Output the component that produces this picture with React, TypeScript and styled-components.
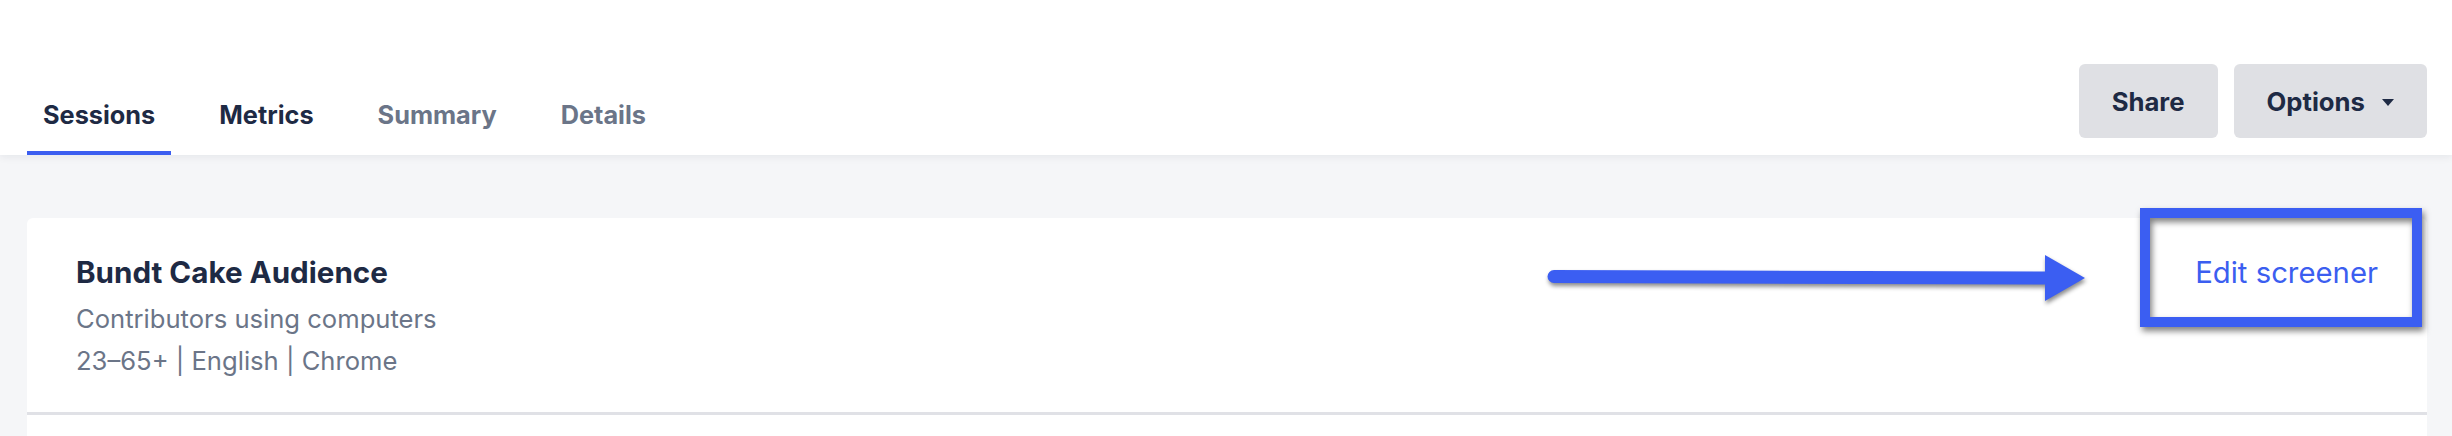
import React from "react";
import styled, { createGlobalStyle } from "styled-components";

const FONT = `"Inter", "Noto Sans", sans-serif`;

const GlobalStyle = createGlobalStyle`
  html, body { margin: 0; padding: 0; background: #f5f6f8; overflow: hidden; }
  body { font-family: ${FONT}; -webkit-font-smoothing: antialiased; }
  * { box-sizing: border-box; }
`;

const Page = styled.div`
  width: 2452px;
  min-height: 436px;
  background: #f5f6f8;
`;

const Header = styled.header`
  position: relative;
  z-index: 1;
  height: 155px;
  background: #fff;
  box-shadow: 0 2px 8px rgba(20, 30, 50, 0.07);
  display: flex;
  justify-content: space-between;
  padding: 0 25px 0 27px;
`;

const Tabs = styled.nav`
  display: flex;
  align-self: flex-end;
  gap: 32px;
`;

const Tab = styled.a<{ $active?: boolean; $dim?: boolean }>`
  font-size: 25.3px;
  font-weight: 700;
  line-height: 30px;
  padding: 0 16px 21px;
  color: ${(p) => (p.$dim ? "#6b7588" : "#1e2a44")};
  border-bottom: 4px solid ${(p) => (p.$active ? "#3b5ef0" : "transparent")};
  cursor: pointer;
`;

const Actions = styled.div`
  display: flex;
  gap: 16px;
  padding-top: 64px;
  align-self: flex-start;
`;

const Button = styled.button`
  height: 74px;
  padding: 0 33px;
  border: none;
  border-radius: 6px;
  background: #dfe0e4;
  color: #1e2a44;
  font: 700 25.7px ${FONT};
  display: flex;
  align-items: center;
  gap: 17px;
`;

const Caret = styled.span`
  width: 0;
  height: 0;
  border-left: 6.5px solid transparent;
  border-right: 6.5px solid transparent;
  border-top: 7px solid #1e2a44;
  margin-top: 2px;
`;

const Body = styled.main`
  padding: 63px 25px 0 27px;
`;

const Card = styled.section`
  background: #fff;
  border-radius: 6px 6px 0 0;
`;

const Row = styled.div`
  position: relative;
  display: flex;
  justify-content: space-between;
  align-items: baseline;
  padding: 36px 49px 29px 49px;
  border-bottom: 3px solid #e0e1e6;
`;

const EmptyRow = styled.div`
  height: 60px;
`;

const Info = styled.div`
  display: flex;
  flex-direction: column;
`;

const Title = styled.h2`
  margin: 0;
  font-size: 29.6px;
  line-height: 36px;
  font-weight: 700;
  color: #1e2a44;
`;

const Sub = styled.div<{ $lh: number; $mt?: number }>`
  font-size: 25.6px;
  line-height: ${(p) => p.$lh}px;
  margin-top: ${(p) => p.$mt ?? 0}px;
  color: #6b7588;
`;

const Link = styled.a`
  font-size: 29.3px;
  color: #3b5ef0;
  cursor: pointer;
`;

const HighlightBox = styled.div`
  position: absolute;
  top: -10px;
  right: 5px;
  width: 282px;
  height: 119px;
  border: 10px solid #3b5ef2;
  filter: drop-shadow(2px 4px 3px rgba(0, 0, 0, 0.5));
  pointer-events: none;
`;

const ArrowSvg = styled.svg`
  position: absolute;
  left: 1513px;
  top: 32px;
  overflow: visible;
  filter: drop-shadow(1px 3px 2px rgba(0, 0, 0, 0.45));
  pointer-events: none;
`;

export default function App() {
  return (
    <Page>
      <GlobalStyle />
      <Header>
        <Tabs>
          <Tab $active>Sessions</Tab>
          <Tab>Metrics</Tab>
          <Tab $dim>Summary</Tab>
          <Tab $dim>Details</Tab>
        </Tabs>
        <Actions>
          <Button>Share</Button>
          <Button>
            Options
            <Caret />
          </Button>
        </Actions>
      </Header>
      <Body>
        <Card>
          <Row>
            <Info>
              <Title>Bundt Cake Audience</Title>
              <Sub $lh={40} $mt={9}>Contributors using computers</Sub>
              <Sub $lh={44}>23–65+ | English | Chrome</Sub>
            </Info>
            <Link>Edit screener</Link>
            <ArrowSvg width="560" height="64" viewBox="0 0 560 64">
              <line x1="14" y1="26.5" x2="506" y2="28" stroke="#3b5ef2" strokeWidth="13" strokeLinecap="round" />
              <polygon points="505,5 545,28 505,51" fill="#3b5ef2" />
            </ArrowSvg>
            <HighlightBox />
          </Row>
          <EmptyRow />
        </Card>
      </Body>
    </Page>
  );
}
